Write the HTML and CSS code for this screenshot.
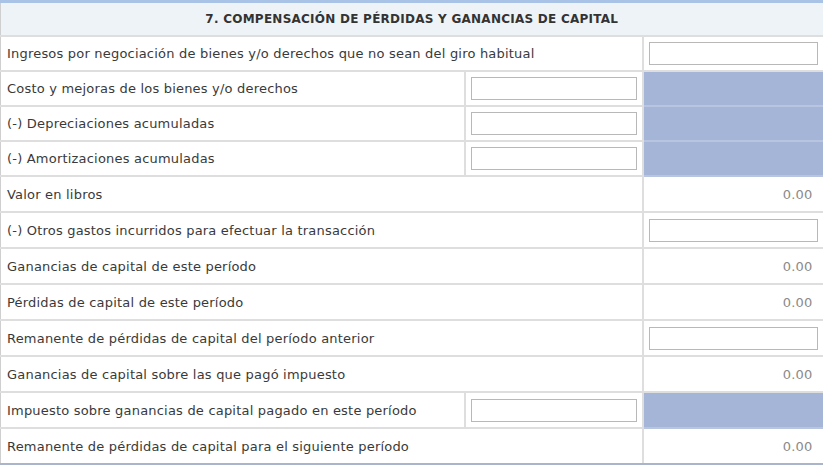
FILE: index.html
```html
<!DOCTYPE html>
<html lang="es">
<head>
<meta charset="utf-8">
<title>Compensación</title>
<link rel="stylesheet" href="styles.css">
</head>
<body>
<div class="strip"></div>
<table class="form">
  <colgroup><col class="c1"><col class="c2"><col class="c3"></colgroup>
  <tr class="hdr"><th colspan="3">7. COMPENSACIÓN DE PÉRDIDAS Y GANANCIAS DE CAPITAL</th></tr>
  <tr class="short"><td colspan="2">Ingresos por negociación de bienes y/o derechos que no sean del giro habitual</td><td class="in"><input type="text"></td></tr>
  <tr class="short"><td>Costo y mejoras de los bienes y/o derechos</td><td class="in"><input type="text"></td><td class="blue"></td></tr>
  <tr class="short"><td>(-) Depreciaciones acumuladas</td><td class="in"><input type="text"></td><td class="blue"></td></tr>
  <tr class="short"><td>(-) Amortizaciones acumuladas</td><td class="in"><input type="text"></td><td class="blue"></td></tr>
  <tr><td colspan="2">Valor en libros</td><td class="num">0.00</td></tr>
  <tr><td colspan="2">(-) Otros gastos incurridos para efectuar la transacción</td><td class="in"><input type="text"></td></tr>
  <tr><td colspan="2">Ganancias de capital de este período</td><td class="num">0.00</td></tr>
  <tr><td colspan="2">Pérdidas de capital de este período</td><td class="num">0.00</td></tr>
  <tr><td colspan="2">Remanente de pérdidas de capital del período anterior</td><td class="in"><input type="text"></td></tr>
  <tr><td colspan="2">Ganancias de capital sobre las que pagó impuesto</td><td class="num">0.00</td></tr>
  <tr><td>Impuesto sobre ganancias de capital pagado en este período</td><td class="in"><input type="text"></td><td class="blue"></td></tr>
  <tr class="last"><td colspan="2">Remanente de pérdidas de capital para el siguiente período</td><td class="num">0.00</td></tr>
</table>
</body>
</html>
```
FILE: styles.css
```css
html, body {
  margin: 0;
  padding: 0;
  background: #ffffff;
}
body {
  width: 823px;
  height: 466px;
  overflow: hidden;
  font-family: "DejaVu Sans", Verdana, sans-serif;
  font-size: 13px;
  letter-spacing: 0.2px;
  color: #3a3a3a;
}
.strip {
  height: 3px;
  background: #a9c3e6;
}
.form {
  width: 823px;
  border-collapse: collapse;
  table-layout: fixed;
}
.c1 { width: 464px; }
.c2 { width: 178px; }
.c3 { width: 181px; }
.form th, .form td {
  border: 2px solid #dedede;
  padding: 0 0 0 6px;
  height: 34px;
  text-align: left;
  white-space: nowrap;
}
.form tr.short td { height: 33px; }
.form tr:first-child th { border-top: none; }
.form td:first-child, .form th:first-child { border-left-width: 1px; border-left-color: #cfcfcf; }
.hdr th {
  height: 32px;
  background: #eef3f8;
  text-align: center;
  font-size: 12px;
  letter-spacing: 0.25px;
  font-weight: bold;
  color: #333333;
  padding: 0;
}
.form td.in {
  padding: 0 5px 0 5px;
}
.form td.in input {
  display: block;
  width: 100%;
  box-sizing: border-box;
  height: 23px;
  margin: 0;
  border: 1px solid #b8b8b8;
  background: #ffffff;
}
.form td.blue {
  background: #a5b5d7;
  border-color: #b9c5e0;
}
.form td.num {
  text-align: right;
  padding-right: 10px;
  color: #8a8a8a;
}
.last td { border-bottom-color: #aab5cb; }
```
